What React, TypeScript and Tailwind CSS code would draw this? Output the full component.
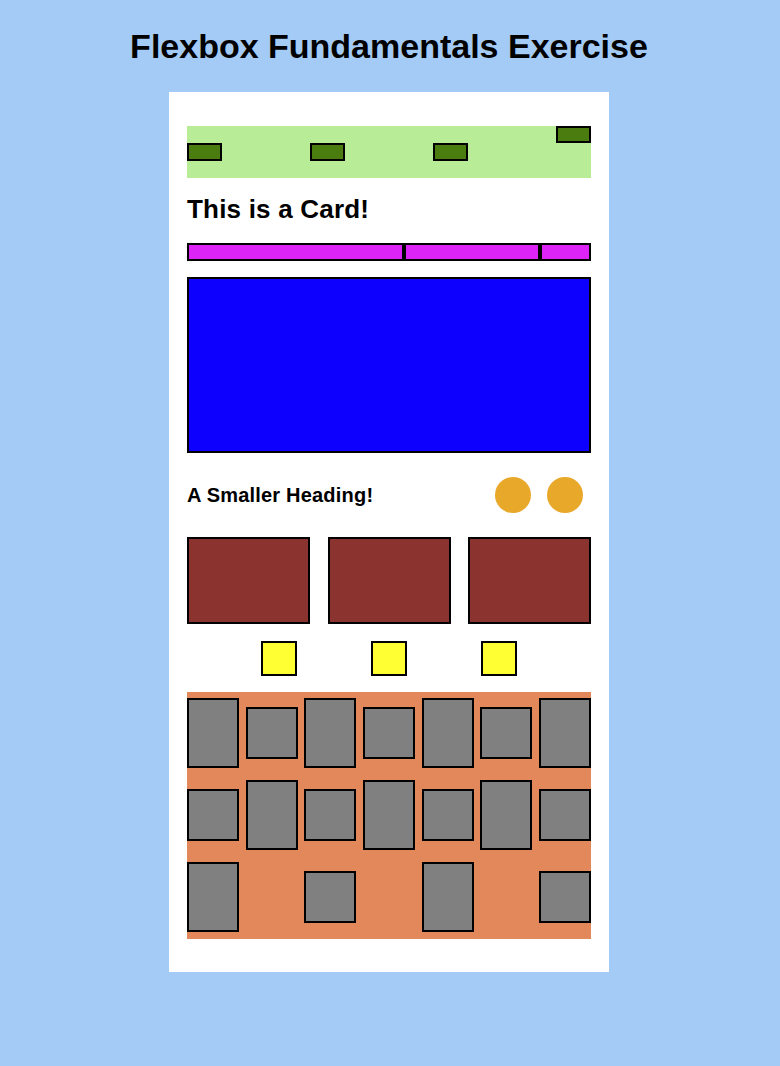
import React from "react";

const font = { fontFamily: '"Liberation Sans", Arial, sans-serif' };

export default function App() {
  const grays = Array.from({ length: 18 }, (_, i) => i);
  return (
    <div className="min-h-[1066px] w-full bg-[#a3cbf6] flex flex-col items-center pr-[2px]" style={font}>
      <h1 className="mt-[28px] h-[36px] leading-[36px] text-[34px] font-bold text-black text-center">
        Flexbox Fundamentals Exercise
      </h1>
      <div className="mt-[28px] w-[440px] bg-white px-[18px] pt-[34px] pb-[33px] flex flex-col">
        <div className="h-[52px] bg-[#b8ec96] flex justify-between items-center">
          <div className="w-[35px] h-[18px] bg-[#4a7c0f] border-2 border-black" />
          <div className="w-[35px] h-[18px] bg-[#4a7c0f] border-2 border-black" />
          <div className="w-[35px] h-[18px] bg-[#4a7c0f] border-2 border-black" />
          <div className="w-[35px] h-[17px] bg-[#4a7c0f] border-2 border-black self-start" />
        </div>
        <h2 className="mt-[15px] mb-[18px] h-[32px] leading-[32px] text-[26px] font-bold text-black tracking-[0.2px]">
          This is a Card!
        </h2>
        <div className="flex h-[18px]">
          <div className="w-[217px] bg-[#db24f5] border-2 border-black" />
          <div className="w-[136px] bg-[#db24f5] border-2 border-black" />
          <div className="flex-1 bg-[#db24f5] border-2 border-black" />
        </div>
        <div className="mt-[16px] h-[176px] bg-[#0e00ff] border-2 border-black" />
        <div className="mt-[24px] mb-[24px] h-[36px] flex items-center justify-between">
          <h3 className="text-[20px] font-bold text-black leading-[36px] tracking-[0.2px]">A Smaller Heading!</h3>
          <div className="flex">
            <div className="w-[36px] h-[36px] rounded-full bg-[#e8a82a] mx-[8px]" />
            <div className="w-[36px] h-[36px] rounded-full bg-[#e8a82a] mx-[8px]" />
          </div>
        </div>
        <div className="flex justify-between">
          <div className="w-[123px] h-[87px] bg-[#8b342f] border-2 border-black" />
          <div className="w-[123px] h-[87px] bg-[#8b342f] border-2 border-black" />
          <div className="w-[123px] h-[87px] bg-[#8b342f] border-2 border-black" />
        </div>
        <div className="mt-[17px] flex justify-evenly">
          <div className="w-[36px] h-[35px] bg-[#ffff33] border-2 border-black" />
          <div className="w-[36px] h-[35px] bg-[#ffff33] border-2 border-black" />
          <div className="w-[36px] h-[35px] bg-[#ffff33] border-2 border-black" />
        </div>
        <div className="mt-[16px] pb-[1px] bg-[#e2885a] flex flex-wrap justify-between items-center">
          {grays.map((i) => (
            <div
              key={i}
              className={
                i % 2 === 0
                  ? "w-[52px] h-[70px] my-[6px] bg-[#808080] border-2 border-black"
                  : "w-[52px] h-[52px] my-[6px] bg-[#808080] border-2 border-black"
              }
            />
          ))}
        </div>
      </div>
    </div>
  );
}
